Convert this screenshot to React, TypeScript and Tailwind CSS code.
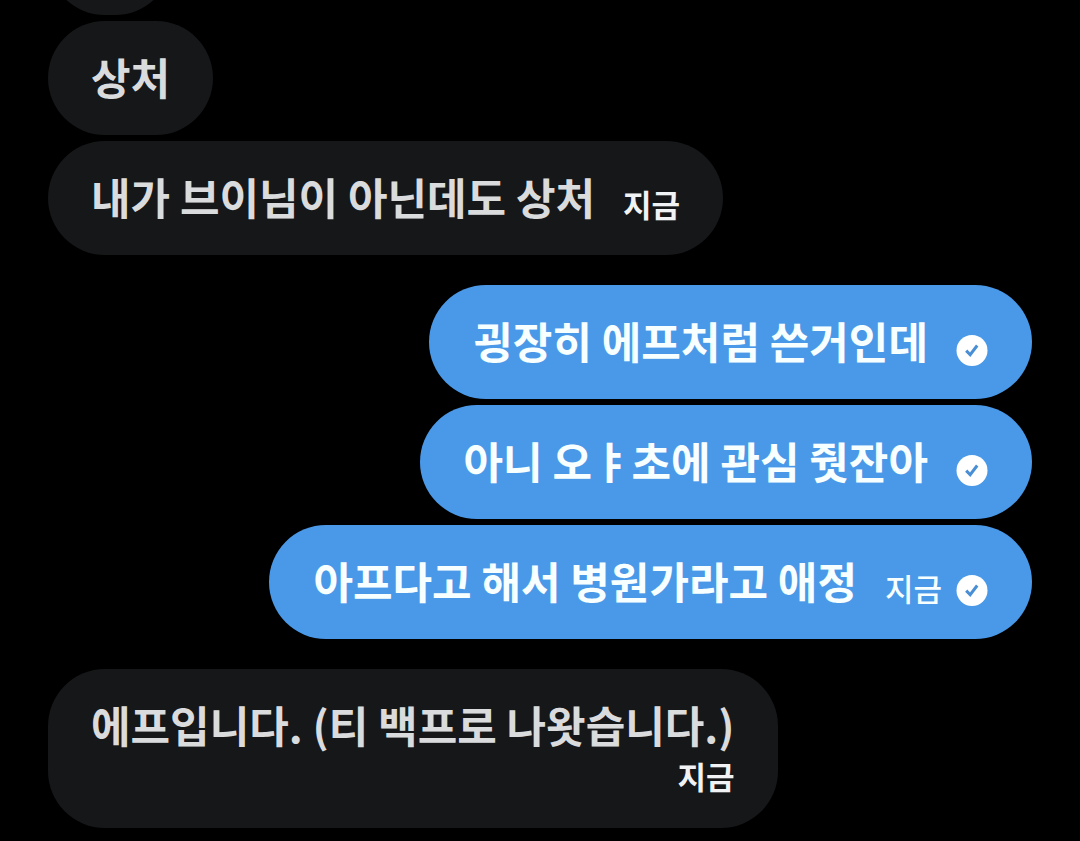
import React from "react";

type Message = { id: number; text: string; time?: string; below?: boolean };

const received: Message[] = [
  { id: 1, text: "상처" },
  { id: 2, text: "내가 브이님이 아닌데도 상처", time: "지금" },
];
const sent: Message[] = [
  { id: 3, text: "굉장히 에프처럼 쓴거인데" },
  { id: 4, text: "아니 오ㅑ초에 관심 줫잔아" },
  { id: 5, text: "아프다고 해서 병원가라고 애정", time: "지금" },
];
const reply: Message[] = [
  { id: 6, text: "에프입니다. (티 백프로 나왓습니다.)", time: "지금", below: true },
];

function Check() {
  return (
    <svg viewBox="0 0 32 32" className="size-8 shrink-0" role="img" aria-label="전송됨">
      <circle cx="16" cy="16.5" r="15.5" fill="#fff" />
      <path d="M10.2 16.6l4 4.1 7-9.2" fill="none" stroke="#4a8fd6" strokeWidth="3" />
    </svg>
  );
}

function Received({ message }: { message: Message }) {
  return (
    <li
      className={
        message.below
          ? "flex max-w-full flex-col rounded-[57px] bg-[#161719] px-[43px] pt-[25px] pb-[30px] text-[#dadbdd]"
          : "flex h-[114px] items-center gap-7 rounded-full bg-[#161719] px-[43px] pb-1 text-[#dadbdd]"
      }
    >
      <span className="text-[43px] leading-[60px]">{message.text}</span>
      {message.time && (
        <time
          className={
            message.below
              ? "self-end text-[31px] leading-[44px] text-[#f1f2f4]"
              : "pt-4 text-[31px] leading-[44px] text-[#f1f2f4]"
          }
        >
          {message.time}
        </time>
      )}
    </li>
  );
}

function Sent({ message }: { message: Message }) {
  return (
    <li className="flex h-[114px] items-center gap-7 rounded-full bg-[#4a99e9] px-11 pb-1 text-[#f7ffff]">
      <span className="text-[43px] leading-[60px]">{message.text}</span>
      <span className="flex items-center gap-3.5 pt-5">
        {message.time && (
          <time className="pb-1 text-[31px] leading-[44px] font-medium">{message.time}</time>
        )}
        <Check />
      </span>
    </li>
  );
}

export default function App() {
  return (
    <main className="flex min-h-screen flex-col gap-[30px] overflow-hidden bg-black px-12 pb-3 font-['Noto_Sans_CJK_KR',sans-serif] font-bold whitespace-nowrap">
      <ul className="flex flex-col items-start gap-1.5">
        <li className="h-[15px] w-[124px] overflow-hidden">
          <div className="-mt-[99px] h-[114px] rounded-full bg-[#161719]" />
        </li>
        {received.map((m) => (
          <Received key={m.id} message={m} />
        ))}
      </ul>
      <ul className="flex flex-col items-end gap-1.5">
        {sent.map((m) => (
          <Sent key={m.id} message={m} />
        ))}
      </ul>
      <ul className="flex flex-col items-start gap-1.5">
        {reply.map((m) => (
          <Received key={m.id} message={m} />
        ))}
      </ul>
    </main>
  );
}
